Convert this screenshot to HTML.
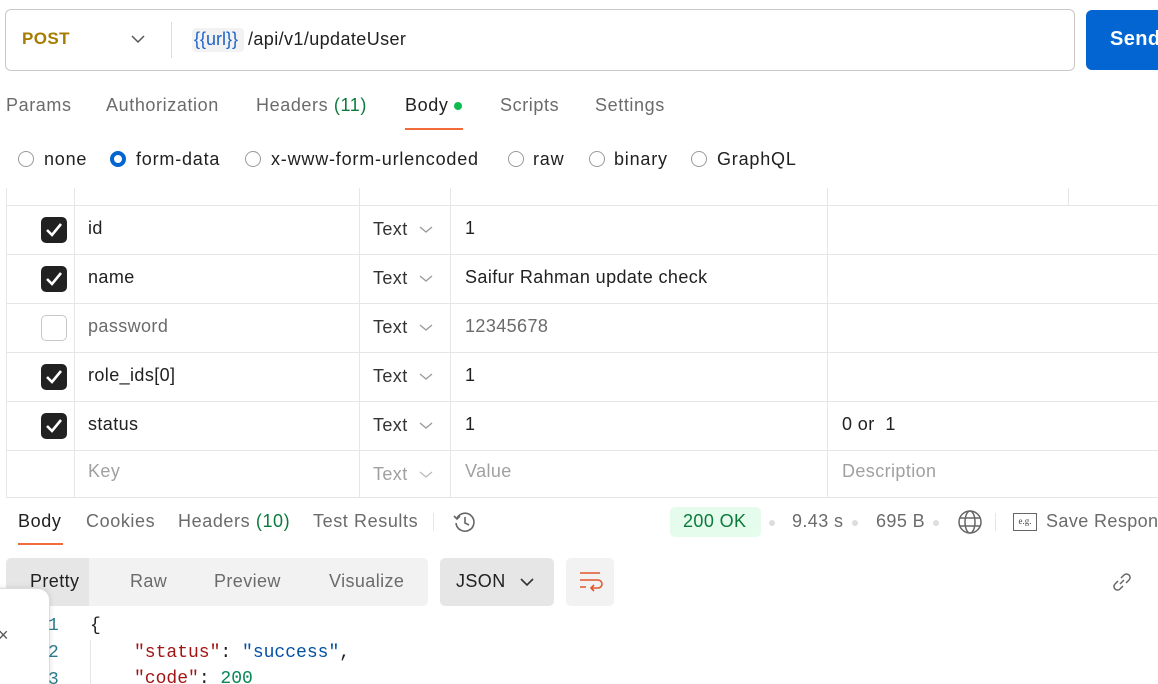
<!DOCTYPE html>
<html><head><meta charset="utf-8"><style>
*{margin:0;padding:0;box-sizing:border-box}
html,body{width:1158px;height:684px;overflow:hidden}
body{background:#fff;font-family:"Liberation Sans",sans-serif;color:#212121;position:relative;font-size:18px;letter-spacing:0.4px}
.a{position:absolute;white-space:nowrap}
.g{color:#6b6b6b}
.t{font-size:18px;letter-spacing:0.6px}
.hl{position:absolute;height:1px;background:#e6e6e6}
.vl{position:absolute;width:1px;background:#e6e6e6}
.cb{position:absolute;left:41px;width:26px;height:26px;border-radius:5px;background:#212121}
.cb svg{position:absolute;left:4px;top:5px}
.cbo{position:absolute;left:41px;width:26px;height:26px;border-radius:5px;border:1.5px solid #c8c8c8;background:#fff}
.rad{position:absolute;width:16px;height:16px;border-radius:50%;border:1.5px solid #9a9a9a;top:151px}
.chev{position:absolute}
.mono{font-family:"Liberation Mono",monospace;font-size:18px;letter-spacing:0}
</style></head><body>
<div class="a" style="left:5px;top:9px;width:1070px;height:62px;border:1px solid #c9c9c9;border-radius:6px"></div>
<div class="a" style="left:22px;top:29px;font-weight:bold;color:#a67c00;font-size:17px">POST</div>
<svg class="chev" style="left:131px;top:35px" width="14" height="9"><path d="M1 1l6 6 6-6" fill="none" stroke="#555" stroke-width="1.5"/></svg>
<div class="vl" style="left:171px;top:22px;height:36px;background:#ddd"></div>
<div class="a" style="left:192px;top:28px;height:24px;width:52px;background:#f2f2f2;border-radius:4px"></div>
<div class="a" style="left:194px;top:29px;color:#1d63c7;letter-spacing:0">{{url}}</div>
<div class="a" style="left:248px;top:29px">/api/v1/updateUser</div>
<div class="a" style="left:1086px;top:10px;width:80px;height:60px;background:#0265d2;border-radius:6px"></div>
<div class="a" style="left:1110px;top:28px;color:#fff;font-weight:bold;font-size:20px">Send</div>
<div class="a g t" style="left:6px;top:95px">Params</div>
<div class="a g t" style="left:106px;top:95px">Authorization</div>
<div class="a g t" style="left:256px;top:95px">Headers <span style="color:#0c7a3d">(11)</span></div>
<div class="a t" style="left:405px;top:95px">Body</div>
<div class="a" style="left:454px;top:102px;width:8px;height:8px;border-radius:50%;background:#0cbb52"></div>
<div class="a" style="left:405px;top:128px;width:58px;height:2px;background:#f26b3a"></div>
<div class="a g t" style="left:500px;top:95px">Scripts</div>
<div class="a g t" style="left:595px;top:95px">Settings</div>
<div class="rad" style="left:18px"></div><div class="a" style="left:44px;top:149px;letter-spacing:0.8px">none</div>
<div class="rad" style="left:110px;border:4px solid #0265d2"></div><div class="a" style="left:136px;top:149px;letter-spacing:0.8px">form-data</div>
<div class="rad" style="left:245px"></div><div class="a" style="left:271px;top:149px;letter-spacing:0.8px">x-www-form-urlencoded</div>
<div class="rad" style="left:508px"></div><div class="a" style="left:533px;top:149px;letter-spacing:0.8px">raw</div>
<div class="rad" style="left:589px"></div><div class="a" style="left:614px;top:149px;letter-spacing:0.8px">binary</div>
<div class="rad" style="left:691px"></div><div class="a" style="left:717px;top:149px;letter-spacing:0.8px">GraphQL</div>
<div class="vl" style="left:6px;top:188px;height:309px"></div>
<div class="vl" style="left:74px;top:188px;height:309px"></div>
<div class="vl" style="left:359px;top:188px;height:309px"></div>
<div class="vl" style="left:450px;top:188px;height:309px"></div>
<div class="vl" style="left:827px;top:188px;height:309px"></div>
<div class="vl" style="left:1068px;top:188px;height:17px"></div>
<div class="hl" style="left:6px;top:205px;width:1152px"></div>
<div class="hl" style="left:6px;top:254px;width:1152px"></div>
<div class="hl" style="left:6px;top:303px;width:1152px"></div>
<div class="hl" style="left:6px;top:352px;width:1152px"></div>
<div class="hl" style="left:6px;top:401px;width:1152px"></div>
<div class="hl" style="left:6px;top:450px;width:1152px"></div>
<div class="hl" style="left:6px;top:497px;width:1152px"></div>
<div class="cb" style="top:217px"><svg width="18" height="16"><path d="M2 8l5 5 9-11" fill="none" stroke="#fff" stroke-width="2.6"/></svg></div>
<div class="cb" style="top:266px"><svg width="18" height="16"><path d="M2 8l5 5 9-11" fill="none" stroke="#fff" stroke-width="2.6"/></svg></div>
<div class="cbo" style="top:315px"></div>
<div class="cb" style="top:364px"><svg width="18" height="16"><path d="M2 8l5 5 9-11" fill="none" stroke="#fff" stroke-width="2.6"/></svg></div>
<div class="cb" style="top:413px"><svg width="18" height="16"><path d="M2 8l5 5 9-11" fill="none" stroke="#fff" stroke-width="2.6"/></svg></div>
<div class="a" style="left:88px;top:218px">id</div>
<div class="a" style="left:88px;top:267px">name</div>
<div class="a g" style="left:88px;top:316px">password</div>
<div class="a" style="left:88px;top:365px">role_ids[0]</div>
<div class="a" style="left:88px;top:414px">status</div>
<div class="a" style="left:88px;top:461px;color:#a0a0a0">Key</div>
<div class="a" style="left:373px;top:219px;color:#333">Text</div>
<div class="a" style="left:373px;top:268px;color:#333">Text</div>
<div class="a" style="left:373px;top:317px;color:#333">Text</div>
<div class="a" style="left:373px;top:366px;color:#333">Text</div>
<div class="a" style="left:373px;top:415px;color:#333">Text</div>
<div class="a" style="left:373px;top:464px;color:#a0a0a0">Text</div>
<svg class="chev" style="left:419px;top:226px" width="14" height="8"><path d="M1 1l6 5 6-5" fill="none" stroke="#999" stroke-width="1.3"/></svg>
<svg class="chev" style="left:419px;top:275px" width="14" height="8"><path d="M1 1l6 5 6-5" fill="none" stroke="#999" stroke-width="1.3"/></svg>
<svg class="chev" style="left:419px;top:324px" width="14" height="8"><path d="M1 1l6 5 6-5" fill="none" stroke="#999" stroke-width="1.3"/></svg>
<svg class="chev" style="left:419px;top:373px" width="14" height="8"><path d="M1 1l6 5 6-5" fill="none" stroke="#999" stroke-width="1.3"/></svg>
<svg class="chev" style="left:419px;top:422px" width="14" height="8"><path d="M1 1l6 5 6-5" fill="none" stroke="#999" stroke-width="1.3"/></svg>
<svg class="chev" style="left:419px;top:471px" width="14" height="8"><path d="M1 1l6 5 6-5" fill="none" stroke="#bbb" stroke-width="1.3"/></svg>
<div class="a" style="left:465px;top:218px">1</div>
<div class="a" style="left:465px;top:267px">Saifur Rahman update check</div>
<div class="a g" style="left:465px;top:316px">12345678</div>
<div class="a" style="left:465px;top:365px">1</div>
<div class="a" style="left:465px;top:414px">1</div>
<div class="a" style="left:465px;top:461px;color:#a0a0a0">Value</div>
<div class="a" style="left:842px;top:414px">0 or&nbsp; 1</div>
<div class="a" style="left:842px;top:461px;color:#a0a0a0">Description</div>
<div class="a t" style="left:18px;top:511px">Body</div>
<div class="a" style="left:18px;top:543px;width:45px;height:2px;background:#f26b3a"></div>
<div class="a g t" style="left:86px;top:511px">Cookies</div>
<div class="a g t" style="left:178px;top:511px">Headers <span style="color:#0c7a3d">(10)</span></div>
<div class="a g t" style="left:313px;top:511px">Test Results</div>
<div class="vl" style="left:433px;top:513px;height:18px"></div>
<svg class="a" style="left:452px;top:509px" width="26" height="26" viewBox="0 0 26 26"><path d="M5 9A9 9 0 1 1 4 14" fill="none" stroke="#666" stroke-width="1.6"/><path d="M2 7l3 3 3-3" fill="none" stroke="#666" stroke-width="1.6"/><path d="M13 8v6l4 2" fill="none" stroke="#666" stroke-width="1.6"/></svg>
<div class="a" style="left:670px;top:507px;width:91px;height:30px;background:#e5fbec;border-radius:5px"></div>
<div class="a" style="left:683px;top:511px;color:#0c7a3d">200 OK</div>
<div class="a" style="left:769px;top:520px;width:6px;height:6px;border-radius:50%;background:#ddd"></div>
<div class="a g" style="left:792px;top:511px">9.43 s</div>
<div class="a" style="left:852px;top:520px;width:6px;height:6px;border-radius:50%;background:#ddd"></div>
<div class="a g" style="left:876px;top:511px">695 B</div>
<div class="a" style="left:933px;top:520px;width:6px;height:6px;border-radius:50%;background:#ddd"></div>
<svg class="a" style="left:957px;top:509px" width="26" height="26" viewBox="0 0 26 26"><circle cx="13" cy="13" r="11" fill="none" stroke="#666" stroke-width="1.5"/><ellipse cx="13" cy="13" rx="5" ry="11" fill="none" stroke="#666" stroke-width="1.5"/><path d="M2.5 9h21M2.5 17h21" stroke="#666" stroke-width="1.5"/></svg>
<div class="vl" style="left:995px;top:513px;height:18px"></div>
<div class="a" style="left:1013px;top:513px;width:24px;height:18px;border:1.5px solid #666;font-size:9px;line-height:15px;text-align:center;color:#444;letter-spacing:0;font-family:'Liberation Serif',serif">e.g.</div>
<div class="a g" style="left:1046px;top:511px">Save Response</div>
<div class="a" style="left:6px;top:558px;width:422px;height:48px;background:#f2f2f2;border-radius:5px"></div>
<div class="a" style="left:6px;top:558px;width:83px;height:48px;background:#e6e6e6;border-radius:5px 0 0 5px"></div>
<div class="a" style="left:30px;top:571px">Pretty</div>
<div class="a g" style="left:130px;top:571px">Raw</div>
<div class="a g" style="left:214px;top:571px">Preview</div>
<div class="a g" style="left:329px;top:571px">Visualize</div>
<div class="a" style="left:440px;top:558px;width:114px;height:48px;background:#e6e6e6;border-radius:5px"></div>
<div class="a" style="left:456px;top:571px">JSON</div>
<svg class="chev" style="left:520px;top:578px" width="14" height="9"><path d="M1 1l6 6 6-6" fill="none" stroke="#333" stroke-width="1.6"/></svg>
<div class="a" style="left:566px;top:558px;width:48px;height:48px;background:#f2f2f2;border-radius:5px"></div>
<svg class="a" style="left:578px;top:570px" width="26" height="24"><path d="M2 3h20M2 10h18a4 4 0 0 1 0 8h-7M2 17h6" fill="none" stroke="#e0582a" stroke-width="1.6"/><path d="M16 15l-3 3 3 3" fill="none" stroke="#e0582a" stroke-width="1.6"/></svg>
<svg class="a" style="left:1110px;top:570px" width="24" height="24" viewBox="0 0 24 24"><path d="M10 14l4-4M8 11l-3 3a3.5 3.5 0 0 0 5 5l3-3M16 13l3-3a3.5 3.5 0 0 0-5-5l-3 3" fill="none" stroke="#666" stroke-width="1.5"/></svg>
<div class="a" style="left:-20px;top:588px;width:70px;height:120px;background:#fff;border:1px solid #ddd;border-radius:12px;box-shadow:0 0 6px rgba(0,0,0,.12)"></div>
<div class="a" style="left:-2px;top:625px;color:#555">×</div>
<div class="a mono" style="left:48px;top:616px;color:#2b7a8c">1</div>
<div class="a mono" style="left:48px;top:643px;color:#2b7a8c">2</div>
<div class="a mono" style="left:48px;top:670px;color:#2b7a8c">3</div>
<div class="a mono" style="left:90px;top:616px">{</div>
<div class="vl" style="left:90px;top:640px;height:50px"></div>
<div class="a mono" style="left:134px;top:643px"><span style="color:#a31515">"status"</span>: <span style="color:#0451a5">"success"</span>,</div>
<div class="a mono" style="left:134px;top:669px"><span style="color:#a31515">"code"</span>: <span style="color:#098658">200</span></div>
</body></html>
